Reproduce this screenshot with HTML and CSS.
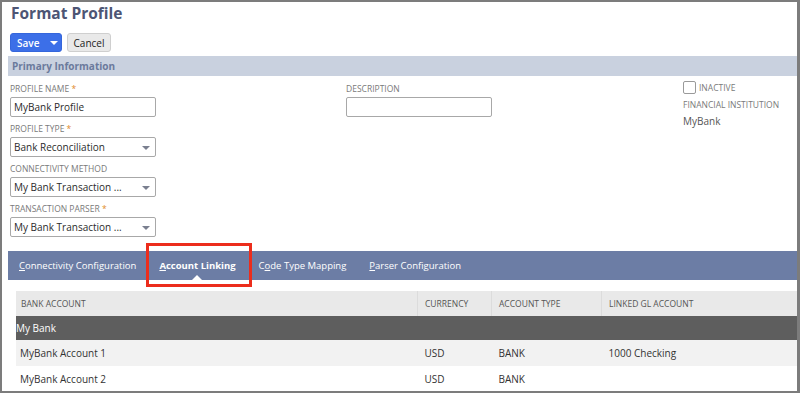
FILE: index.html
```html
<!DOCTYPE html>
<html lang="en">
<head>
    <meta charset="UTF-8">
    <title>Format Profile</title>
    <link rel="stylesheet" href="styles.css">
</head>
<body>
    <div class="frame">
        <h1 class="page-title">Format Profile</h1>

        <div class="actions">
            <button class="btn btn-primary">Save <span class="caret"></span></button>
            <button class="btn btn-secondary">Cancel</button>
        </div>

        <div class="section-head">Primary Information</div>

        <div class="fields">
            <div class="col">
                <div class="field">
                    <label>Profile Name <span class="req">*</span></label>
                    <div class="input">MyBank Profile</div>
                </div>
                <div class="field">
                    <label>Profile Type <span class="req">*</span></label>
                    <div class="input select">Bank Reconciliation<span class="arrow"></span></div>
                </div>
                <div class="field">
                    <label>Connectivity Method</label>
                    <div class="input select">My Bank Transaction ...<span class="arrow"></span></div>
                </div>
                <div class="field">
                    <label>Transaction Parser <span class="req">*</span></label>
                    <div class="input select">My Bank Transaction ...<span class="arrow"></span></div>
                </div>
            </div>
            <div class="col col-mid">
                <div class="field">
                    <label>Description</label>
                    <div class="input"></div>
                </div>
            </div>
            <div class="col col-right">
                <div class="check-row"><span class="checkbox"></span><label>Inactive</label></div>
                <div class="field">
                    <label>Financial Institution</label>
                    <div class="value">MyBank</div>
                </div>
            </div>
        </div>

        <div class="tabs">
            <a class="tab"><u>C</u>onnectivity Configuration</a>
            <a class="tab active"><u>A</u>ccount Linking</a>
            <a class="tab">C<u>o</u>de Type Mapping</a>
            <a class="tab"><u>P</u>arser Configuration</a>
        </div>

        <table class="grid">
            <thead>
                <tr>
                    <th class="c-bank">Bank Account</th>
                    <th class="c-cur">Currency</th>
                    <th class="c-type">Account Type</th>
                    <th>Linked GL Account</th>
                </tr>
            </thead>
            <tbody>
                <tr class="group"><td colspan="4">My Bank</td></tr>
                <tr class="odd">
                    <td>MyBank Account 1</td>
                    <td>USD</td>
                    <td>BANK</td>
                    <td>1000 Checking</td>
                </tr>
                <tr>
                    <td>MyBank Account 2</td>
                    <td>USD</td>
                    <td>BANK</td>
                    <td></td>
                </tr>
            </tbody>
        </table>
    </div>
</body>
</html>
```

FILE: styles.css
```css
body {
    margin: 0;
    background: white;
    font-family: "Open Sans", Arial, sans-serif;
    color: #333;
}

.frame {
    width: 800px;
    height: 393px;
    box-sizing: border-box;
    border: 2px solid #7c7c7c;
    border-right-width: 3px;
    padding-left: 6px;
    overflow: hidden;
}

.page-title {
    margin: 0;
    padding: 0 0 0 3px;
    height: 31px;
    box-sizing: border-box;
    font-size: 15.5px;
    line-height: 22px;
    font-weight: 700;
    color: #4d5574;
}

.actions {
    display: flex;
    gap: 5px;
    padding-left: 2px;
    height: 23px;
}

.btn {
    font-family: inherit;
    font-size: 10px;
    height: 19px;
    border-radius: 3px;
    padding: 0;
    display: flex;
    align-items: center;
}

.btn-primary {
    width: 52px;
    background: #3c6fe8;
    border: 1px solid #3566db;
    color: white;
    font-weight: 600;
    padding-left: 6px;
    gap: 11px;
}

.caret {
    width: 0;
    height: 0;
    border-left: 4px solid transparent;
    border-right: 4px solid transparent;
    border-top: 4px solid white;
}

.btn-secondary {
    width: 44px;
    background: #e9e9e9;
    border: 1px solid #cfcfcf;
    color: #222;
    justify-content: center;
}

.section-head {
    height: 20px;
    background: #c9d1df;
    color: #6b7a9c;
    font-size: 10px;
    font-weight: 700;
    line-height: 20px;
    padding-left: 4px;
    margin-right: -3px;
}

.fields {
    display: flex;
    padding: 6px 0 0 2px;
}

.col {
    flex: none;
    width: 336px;
}

.col-mid {
    width: 337px;
}

.col-right {
    width: auto;
}

.field {
    margin-bottom: 5px;
}

.field label,
.check-row label {
    display: block;
    font-size: 8.5px;
    line-height: 14px;
    color: #7a7a7a;
    text-transform: uppercase;
    margin-bottom: 1px;
}

.req {
    color: #e08a28;
}

.input {
    width: 146px;
    height: 20px;
    box-sizing: border-box;
    border: 1px solid #a8a8a8;
    border-radius: 2px;
    font-size: 10px;
    line-height: 18px;
    padding-left: 3px;
    color: #2b2b2b;
    position: relative;
}

.arrow {
    position: absolute;
    right: 5px;
    top: 8px;
    width: 0;
    height: 0;
    border-left: 4px solid transparent;
    border-right: 4px solid transparent;
    border-top: 4px solid #7a7f8f;
}

.check-row {
    display: flex;
    align-items: center;
    gap: 3px;
    margin: -1px 0 4px;
    height: 13px;
}

.check-row label {
    margin: 0;
}

.checkbox {
    width: 13px;
    height: 13px;
    box-sizing: border-box;
    border: 1px solid #9a9a9a;
    border-radius: 2px;
}

.value {
    font-size: 10px;
    line-height: 16px;
    color: #555;
}

.tabs {
    display: flex;
    height: 29px;
    margin: 9px -3px 0 0;
    background: #6c7da5;
    padding-left: 11px;
    gap: 23px;
}

.tab {
    font-size: 9.5px;
    line-height: 29px;
    color: white;
    position: relative;
}

.tab.active {
    font-weight: 700;
}

.tab.active::before {
    content: "";
    position: absolute;
    left: -13px;
    right: -16px;
    top: -8px;
    bottom: -7px;
    border: 3.5px solid #ec2d1c;
}

.tab.active::after {
    content: "";
    position: absolute;
    left: 50%;
    bottom: 0;
    margin-left: -5px;
    border-left: 5px solid transparent;
    border-right: 5px solid transparent;
    border-bottom: 5px solid white;
}

.grid {
    border-collapse: collapse;
    margin: 11px -3px 0 8px;
    width: 784px;
    font-size: 10px;
}

.grid th {
    background: #e9e9e9;
    height: 25px;
    font-size: 8.5px;
    font-weight: 400;
    color: #555;
    text-align: left;
    text-transform: uppercase;
    padding: 0 0 0 7px;
    border-left: 1px solid #dcdcdc;
}

.grid th:first-child {
    border-left: none;
    padding-left: 5px;
}

.c-bank {
    width: 396px;
}

.c-cur {
    width: 66px;
}

.c-type {
    width: 102px;
}

.grid td {
    height: 26px;
    padding: 0 0 0 7px;
    color: #333;
}

.grid td:first-child {
    padding-left: 4px;
}

.grid tr.group td {
    background: #5e5e5e;
    color: white;
    height: 24px;
    padding-left: 0;
}

.grid tr.odd td {
    background: #f2f2f2;
}
```
